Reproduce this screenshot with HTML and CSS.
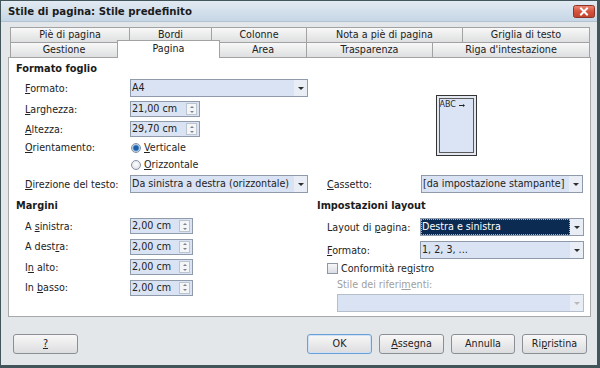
FILE: index.html
```html
<!DOCTYPE html>
<html lang="it">
<head>
<meta charset="utf-8">
<title>Stile di pagina</title>
<link rel="stylesheet" href="styles.css">
</head>
<body>
<div class="window">
  <div class="titlebar">
    <span class="title">Stile di pagina: Stile predefinito</span>
    <span class="close">
      <svg width="22" height="13" viewBox="0 0 22 13">
        <defs>
          <linearGradient id="cg" x1="0" y1="0" x2="0" y2="1">
            <stop offset="0" stop-color="#eb8a76"/>
            <stop offset="0.5" stop-color="#d5533c"/>
            <stop offset="1" stop-color="#c2412c"/>
          </linearGradient>
        </defs>
        <rect x="0.5" y="0.5" width="21" height="12" rx="2" fill="url(#cg)" stroke="#8e3426"/>
        <path d="M8 3.5 L14 9.5 M14 3.5 L8 9.5" stroke="#fff" stroke-width="2" stroke-linecap="square"/>
      </svg>
    </span>
  </div>
  <div class="body">
    <div class="tabs">
      <div class="tabrow r1">
        <div class="tab">Piè di pagina</div>
        <div class="tab">Bordi</div>
        <div class="tab">Colonne</div>
        <div class="tab">Nota a piè di pagina</div>
        <div class="tab">Griglia di testo</div>
      </div>
      <div class="tabrow r2">
        <div class="tab">Gestione</div>
        <div class="tab active">Pagina</div>
        <div class="tab">Area</div>
        <div class="tab">Trasparenza</div>
        <div class="tab">Riga d'intestazione</div>
      </div>
    </div>
    <div class="panel">
      <div class="heading">Formato foglio</div>
      <div class="top">
        <div class="fgrid">
          <span class="lbl"><u>F</u>ormato:</span>
          <div class="combo wide"><span class="val">A4</span><span class="arr"><i class="tri"></i></span></div>
          <span class="lbl"><u>L</u>arghezza:</span>
          <div class="spin w70"><span class="val">21,00 cm</span><span class="sbtn"><i class="up"></i><i class="dn"></i></span></div>
          <span class="lbl"><u>A</u>ltezza:</span>
          <div class="spin w70"><span class="val">29,70 cm</span><span class="sbtn"><i class="up"></i><i class="dn"></i></span></div>
          <span class="lbl"><u>O</u>rientamento:</span>
          <div class="ropt"><span class="radio on"></span><span><u>V</u>erticale</span></div>
          <span class="lbl"></span>
          <div class="ropt"><span class="radio"></span><span><u>O</u>rizzontale</span></div>
          <span class="lbl"><u>D</u>irezione del testo:</span>
          <div class="combo wide"><span class="val">Da sinistra a destra (orizzontale)</span><span class="arr"><i class="tri"></i></span></div>
        </div>
        <div class="rside">
          <div class="preview">
            <svg width="41" height="61" viewBox="0 0 41 61">
              <rect x="0.5" y="0.5" width="40" height="60" fill="#e3e8f0" stroke="#353535"/>
              <rect x="3.5" y="3.5" width="34" height="54" fill="#dbe4f4" stroke="#5a5a5a"/>
              <text x="3.5" y="11.5" font-family="DejaVu Sans, sans-serif" font-size="8" fill="#2a2a2a">ABC</text>
              <path d="M23 10.5 H28" stroke="#222" stroke-width="1"/>
              <path d="M27 9 L29 10.5 L27 12 Z" fill="#222"/>
            </svg>
          </div>
          <div class="crow">
            <span class="lbl cl"><u>C</u>assetto:</span>
            <div class="combo cas"><span class="val">[da impostazione stampante]</span><span class="arr"><i class="tri"></i></span></div>
          </div>
        </div>
      </div>
      <div class="bottom">
        <div class="bleft">
          <div class="heading">Margini</div>
          <div class="mgrid">
            <span class="lbl">A <u>s</u>inistra:</span>
            <div class="spin w63"><span class="val">2,00 cm</span><span class="sbtn"><i class="up"></i><i class="dn"></i></span></div>
            <span class="lbl">A dest<u>r</u>a:</span>
            <div class="spin w63"><span class="val">2,00 cm</span><span class="sbtn"><i class="up"></i><i class="dn"></i></span></div>
            <span class="lbl">I<u>n</u> alto:</span>
            <div class="spin w63"><span class="val">2,00 cm</span><span class="sbtn"><i class="up"></i><i class="dn"></i></span></div>
            <span class="lbl">In <u>b</u>asso:</span>
            <div class="spin w63"><span class="val">2,00 cm</span><span class="sbtn"><i class="up"></i><i class="dn"></i></span></div>
          </div>
        </div>
        <div class="bright">
          <div class="heading">Impostazioni layout</div>
          <div class="lrows">
            <div class="lrow">
              <span class="lbl rl">Layout di <u>p</u>agina:</span>
              <div class="combo lay sel"><span class="val">Destra e sinistra</span><span class="arr"><i class="tri"></i></span></div>
            </div>
            <div class="lrow second">
              <span class="lbl rl"><u>F</u>ormato:</span>
              <div class="combo lay"><span class="val">1, 2, 3, ...</span><span class="arr"><i class="tri"></i></span></div>
            </div>
            <div class="chkrow"><span class="chk"></span><span>Conformità re<u>g</u>istro</span></div>
            <div class="sublbl">Stile dei riferi<u>m</u>enti:</div>
            <div class="combo dis"><span class="val"></span><span class="arr"><i class="tri"></i></span></div>
          </div>
        </div>
      </div>
    </div>
    <div class="buttons">
      <div class="btn"><u>?</u></div>
      <div class="spacer"></div>
      <div class="btn ok">OK</div>
      <div class="btn"><u>A</u>ssegna</div>
      <div class="btn w64">Annulla</div>
      <div class="btn">Ri<u>p</u>ristina</div>
    </div>
  </div>
</div>
</body>
</html>
```
FILE: styles.css
```css
* { box-sizing: border-box; }
body {
  margin: 0;
  font-family: "DejaVu Sans", "Noto Sans", sans-serif;
  font-size: 9.6px;
  color: #1f1f1f;
  background: #ffffff;
}
u { text-decoration: underline; text-underline-offset: 1px; }
.window {
  width: 600px;
  height: 368px;
  border-style: solid;
  border-color: #41555b;
  border-width: 1px 3px 3px 1px;
  background: #e4e7ea;
  display: flex;
  flex-direction: column;
}
.titlebar {
  height: 21px;
  flex: none;
  background: linear-gradient(#e2eaf2, #c6d6e6);
  border-bottom: 1px solid #b2c2d1;
  display: flex;
  align-items: center;
  justify-content: space-between;
  padding: 0 2px 0 7px;
}
.title { font-weight: bold; font-size: 10.2px; color: #1b1b1b; }
.close { display: flex; height: 13px; margin-top: 1px; }
.body {
  flex: 1;
  display: flex;
  flex-direction: column;
  padding: 5px 6px 0 7px;
}
.tabs { position: relative; z-index: 1; margin: 0 1px 0 2px; }
.tabrow { display: grid; height: 16px; }
.r1 { grid-template-columns: 120px 82px 95px 156px 127px; }
.r2 { grid-template-columns: 108px 102px 87px 126px 157px; margin-top: -1px; }
.tab {
  border: 1px solid #a2a2a2;
  margin-left: -1px;
  background: linear-gradient(#f8f8f8, #dedfe0);
  text-align: center;
  line-height: 14px;
  color: #222;
  white-space: nowrap;
}
.tab:first-child { margin-left: 0; }
.tab.active {
  background: #ffffff;
  margin-top: -2px;
  height: 18px;
  border-bottom: none;
  line-height: 15px;
}
.panel {
  margin-top: -1px;
  height: 260px;
  flex: none;
  background: #ffffff;
  border: 1px solid #a7a9ab;
  padding: 4px 0 0 7px;
}
.heading { font-weight: bold; font-size: 9.8px; height: 14px; line-height: 14px; color: #1b1b1b; white-space: nowrap; }
.top { display: flex; margin: 3px 0 0 9px; }
.fgrid {
  display: grid;
  grid-template-columns: 105px 178px;
  grid-template-rows: 18px 16px 16px 13px 13px 18px;
  row-gap: 4px;
  align-items: center;
}
.lbl { white-space: nowrap; color: #222; }
.rside { margin-left: 19px; width: 256px; display: flex; flex-direction: column; }
.preview { height: 92px; display: flex; align-items: center; justify-content: center; padding-left: 2px; }
.crow { margin-top: 4px; height: 18px; display: flex; align-items: center; }
.cl { width: 94px; }
.combo {
  display: flex;
  height: 18px;
  border: 1px solid #8f9bab;
  background: #dae3f3;
}
.combo .val { flex: 1; padding-left: 1px; line-height: 16px; white-space: nowrap; overflow: hidden; color: #222; }
.combo .arr { width: 13px; display: flex; align-items: center; justify-content: center; background: #e8edf6; }
.tri {
  display: block;
  width: 0;
  height: 0;
  border-left: 3px solid transparent;
  border-right: 3px solid transparent;
  border-top: 3px solid #2e2e2e;
  margin-top: 1px;
}
.combo.wide { width: 178px; }
.combo.cas { width: 162px; }
.combo.lay { width: 164px; }
.combo.sel .val {
  background: #0c2b52;
  color: #ffffff;
  outline: 1px dotted #9fb2c8;
  outline-offset: -1px;
}
.combo.dis { width: 247px; margin-left: 10px; margin-top: 3px; border-color: #b5bfcc; }
.combo.dis .tri { border-top-color: #b8b8b8; }
.spin {
  display: flex;
  align-items: center;
  height: 16px;
  border: 1px solid #8f9bab;
  background: #dae3f3;
}
.spin.w70 { width: 70px; }
.spin.w63 { width: 63px; }
.spin .val { flex: 1; padding-left: 1px; line-height: 14px; white-space: nowrap; color: #222; }
.sbtn {
  width: 11px;
  height: 12px;
  margin-right: 2px;
  border: 1px solid #bcc4cd;
  background: #f4f5f7;
  display: flex;
  flex-direction: column;
  align-items: center;
  justify-content: space-around;
}
.sbtn .up, .sbtn .dn { display: block; width: 0; height: 0; border-left: 2px solid transparent; border-right: 2px solid transparent; }
.sbtn .up { border-bottom: 2px solid #7a8490; }
.sbtn .dn { border-top: 2px solid #7a8490; }
.ropt { display: flex; align-items: center; gap: 3px; padding-left: 1px; }
.radio {
  width: 10px;
  height: 10px;
  border-radius: 50%;
  border: 1px solid #8592a2;
  background: radial-gradient(circle at 50% 40%, #ffffff, #d5dae1);
}
.radio.on { background: radial-gradient(circle, #1b5ea8 0, #1b5ea8 2px, #6fa2d8 3px, #e4e9ef 4px); }
.bottom { display: flex; margin-top: 6px; }
.bleft { width: 301px; }
.mgrid {
  margin: 5px 0 0 9px;
  display: grid;
  grid-template-columns: 105px 63px;
  grid-auto-rows: 16px;
  row-gap: 4.5px;
  align-items: center;
}
.bright { flex: 1; }
.lrows { margin: 5px 0 0 10px; display: flex; flex-direction: column; }
.lrow { display: flex; align-items: center; height: 18px; }
.lrow.second { margin-top: 5px; }
.rl { width: 93px; }
.chkrow { margin-top: 3px; height: 13px; display: flex; align-items: center; gap: 3px; }
.chk {
  width: 11px;
  height: 11px;
  border: 1px solid #8d98a5;
  background: linear-gradient(#f6f7f9, #dadde2);
}
.sublbl { margin: 4px 0 0 10px; height: 12px; line-height: 12px; color: #a0a0a0; }
.buttons { display: flex; height: 20px; margin-top: 17px; padding: 0 4px 0 5px; gap: 7px; }
.spacer { flex: 1; }
.btn {
  width: 65px;
  height: 20px;
  border: 1px solid #8b8f95;
  border-radius: 3px;
  background: linear-gradient(#f8f8f8, #dcdddf);
  text-align: center;
  line-height: 18px;
  color: #222;
}
.btn.w64 { width: 64px; }
.btn.ok { border-color: #6b9fd6; box-shadow: inset 0 0 0 1px #cfe1f4; }
```
